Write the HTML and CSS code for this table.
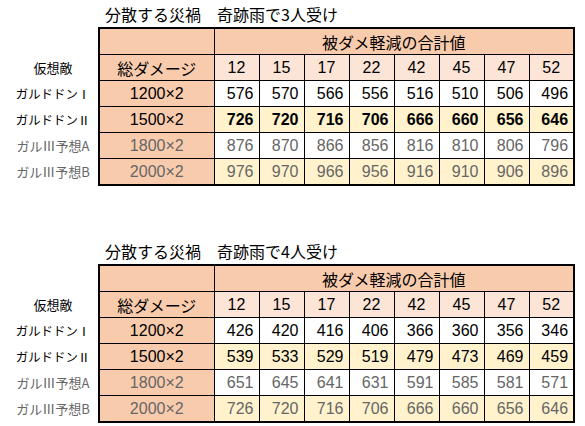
FILE: index.html
```html
<!DOCTYPE html>
<html lang="ja">
<head>
<meta charset="utf-8">
<title>分散する災禍</title>
<link rel="stylesheet" href="styles.css">
</head>
<body>
<div class="sheet">
  <section class="block">
    <div class="title">分散する災禍　奇跡雨で3人受け</div>
    <table class="dmg">
      <colgroup>
        <col class="c-name"><col class="c-total">
        <col class="c-num"><col class="c-num"><col class="c-num"><col class="c-num">
        <col class="c-num"><col class="c-num"><col class="c-num"><col class="c-num">
      </colgroup>
      <tr class="h1">
        <td class="name"></td>
        <td class="total"></td>
        <td class="hdr" colspan="8">被ダメ軽減の合計値</td>
      </tr>
      <tr class="h2">
        <td class="name">仮想敵</td>
        <td class="total">総ダメージ</td>
        <td>12</td><td>15</td><td>17</td><td>22</td><td>42</td><td>45</td><td>47</td><td>52</td>
      </tr>
      <tr class="white">
        <td class="name"><span class="nk">ガルドドンⅠ</span></td>
        <td class="total">1200×2</td>
        <td>576</td><td>570</td><td>566</td><td>556</td><td>516</td><td>510</td><td>506</td><td>496</td>
      </tr>
      <tr class="yellow bold">
        <td class="name"><span class="nk">ガルドドンⅡ</span></td>
        <td class="total">1500×2</td>
        <td>726</td><td>720</td><td>716</td><td>706</td><td>666</td><td>660</td><td>656</td><td>646</td>
      </tr>
      <tr class="white gray">
        <td class="name">ガルⅢ予想A</td>
        <td class="total">1800×2</td>
        <td>876</td><td>870</td><td>866</td><td>856</td><td>816</td><td>810</td><td>806</td><td>796</td>
      </tr>
      <tr class="yellow gray">
        <td class="name">ガルⅢ予想B</td>
        <td class="total">2000×2</td>
        <td>976</td><td>970</td><td>966</td><td>956</td><td>916</td><td>910</td><td>906</td><td>896</td>
      </tr>
    </table>
  </section>

  <section class="block second">
    <div class="title">分散する災禍　奇跡雨で4人受け</div>
    <table class="dmg">
      <colgroup>
        <col class="c-name"><col class="c-total">
        <col class="c-num"><col class="c-num"><col class="c-num"><col class="c-num">
        <col class="c-num"><col class="c-num"><col class="c-num"><col class="c-num">
      </colgroup>
      <tr class="h1">
        <td class="name"></td>
        <td class="total"></td>
        <td class="hdr" colspan="8">被ダメ軽減の合計値</td>
      </tr>
      <tr class="h2">
        <td class="name">仮想敵</td>
        <td class="total">総ダメージ</td>
        <td>12</td><td>15</td><td>17</td><td>22</td><td>42</td><td>45</td><td>47</td><td>52</td>
      </tr>
      <tr class="white">
        <td class="name"><span class="nk">ガルドドンⅠ</span></td>
        <td class="total">1200×2</td>
        <td>426</td><td>420</td><td>416</td><td>406</td><td>366</td><td>360</td><td>356</td><td>346</td>
      </tr>
      <tr class="yellow">
        <td class="name"><span class="nk">ガルドドンⅡ</span></td>
        <td class="total">1500×2</td>
        <td>539</td><td>533</td><td>529</td><td>519</td><td>479</td><td>473</td><td>469</td><td>459</td>
      </tr>
      <tr class="white gray">
        <td class="name">ガルⅢ予想A</td>
        <td class="total">1800×2</td>
        <td>651</td><td>645</td><td>641</td><td>631</td><td>591</td><td>585</td><td>581</td><td>571</td>
      </tr>
      <tr class="yellow gray">
        <td class="name">ガルⅢ予想B</td>
        <td class="total">2000×2</td>
        <td>726</td><td>720</td><td>716</td><td>706</td><td>666</td><td>660</td><td>656</td><td>646</td>
      </tr>
    </table>
  </section>
</div>
</body>
</html>
```

FILE: styles.css
```css
html, body {
  margin: 0;
  padding: 0;
  background: #ffffff;
}

body {
  font-family: "Liberation Sans", "Noto Sans CJK JP", sans-serif;
  color: #000;
}

.sheet {
  padding: 1px 0 0 8px;
}

.block.second {
  margin-top: 52px;
}

.title {
  height: 26px;
  line-height: 26px;
  padding-left: 97px;
  font-family: "Noto Sans CJK JP", sans-serif;
  font-size: 16px;
  white-space: nowrap;
}

.dmg {
  border-collapse: collapse;
  table-layout: fixed;
  width: 566px;
}

.c-name { width: 91px; }
.c-total { width: 115px; }
.c-num { width: 45px; }

.dmg td {
  height: 25px;
  padding: 0 5px 0 0;
  border: 1px solid #000;
  font-size: 16px;
  text-align: right;
  vertical-align: middle;
  white-space: nowrap;
  line-height: 18px;
}

.dmg tr:first-child td.total,
.dmg tr:first-child td.hdr {
  border-top: 2px solid #000;
}

.dmg tr:last-child td:not(.name) {
  border-bottom: 2px solid #000;
}

.dmg td.total {
  border-left: 2px solid #000;
}

.dmg td:last-child {
  border-right: 2px solid #000;
}

.dmg td.name {
  border: none;
  padding: 0;
  text-align: center;
  font-family: "Noto Sans CJK JP", sans-serif;
  font-size: 13px;
  background: #ffffff;
}

.nk {
  font-size: 12.4px;
}

.dmg td.total {
  background: #f8cbad;
  text-align: center;
  padding: 0;
}

.h1 td.total,
.h2 td.total {
  font-family: "Noto Sans CJK JP", sans-serif;
}

.dmg td.hdr {
  background: #f8cbad;
  text-align: center;
  padding: 0;
  font-family: "Noto Sans CJK JP", sans-serif;
}

.h2 td:not(.name):not(.total) {
  background: #fce4d6;
  text-align: center;
  padding: 0;
}

.white td:not(.name):not(.total) {
  background: #ffffff;
}

.yellow td:not(.name):not(.total) {
  background: #fff2cc;
}

.bold td:not(.name):not(.total) {
  font-weight: bold;
}

.gray td {
  color: #666666;
}
```
